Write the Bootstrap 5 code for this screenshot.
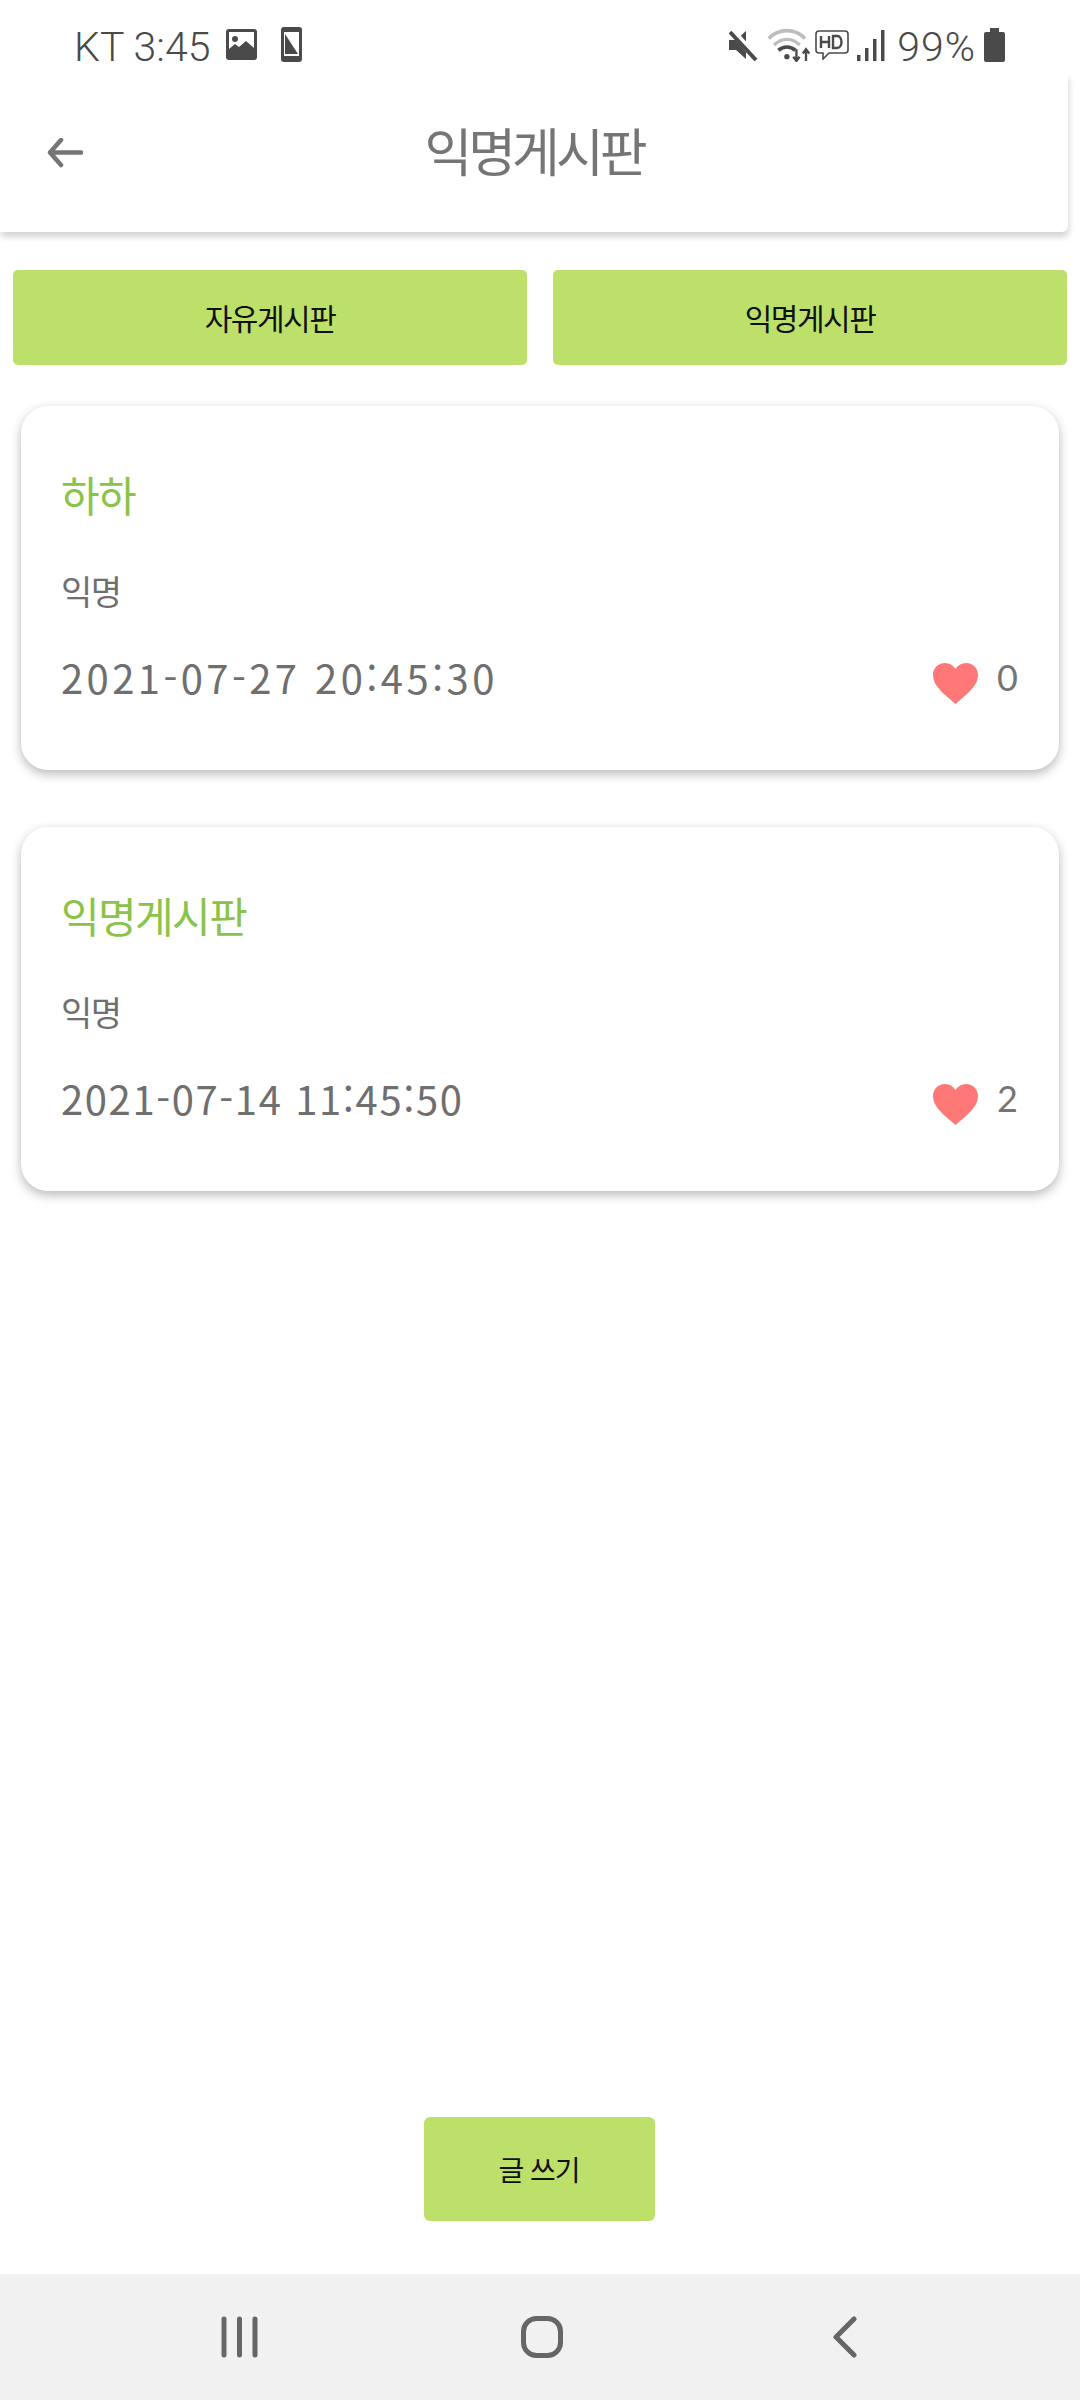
<!DOCTYPE html>
<html lang="ko">
<head>
<meta charset="utf-8">
<title>익명게시판</title>
<link rel="stylesheet" href="https://cdn.jsdelivr.net/npm/bootstrap@5.3.0/dist/css/bootstrap.min.css">
<style>
html,body{background:#fff;height:2400px;overflow:hidden}
body{font-family:"Noto Sans CJK KR","Noto Sans",sans-serif;color:#757575}
.screen{height:2400px}
.status-strip{height:73px;padding:16px 75px 0 74px;color:#4a4a4a;font-family:Roboto,"Liberation Sans",sans-serif;font-weight:300;font-size:41px;line-height:1}
.status-strip svg{display:block;flex:none}
.status-txt{margin-top:6px}
.pct-txt{letter-spacing:1px;margin-left:12px}
.app-head{height:159px;margin-right:12px;background:#fff;box-shadow:1px 5px 6px rgba(0,0,0,.17);border-radius:0 0 6px 0;position:relative}
.back-arrow{left:47px;top:65px}
.head-title{font-size:52px;letter-spacing:-4px;line-height:1;color:#757575;margin-top:-6px}
.tabs-wrap{padding:38px 13px 0;gap:26px}
.tab-btn{height:95px;font-size:30px;letter-spacing:-1.5px;color:#111;background:#bde06a;border:0;border-radius:5px;padding:0;flex:1 1 0}
.tab-btn:hover{background:#bde06a;color:#111}
.post-list{padding:41px 21px 0;gap:57px}
.post-box{height:364px;border:0;border-radius:27px;padding:52px 41px 0 40px;box-shadow:0 4px 11px rgba(0,0,0,.28)}
.post-title{font-size:42px;line-height:72px;color:#8bc34a;letter-spacing:-1.6px;margin:0}
.post-who{font-size:34px;line-height:60px;margin:31px 0 0;letter-spacing:-1.5px;color:#6f6f6f}
.post-line{margin-top:26px;height:60px}
.post-date{font-size:40px;color:#6f6f6f;line-height:60px}
.wide-date{letter-spacing:3.4px}
.tight-date{letter-spacing:1.6px}
.heart-ico{margin-top:12px}
.post-count{font-size:36px;line-height:60px;margin-left:19px;color:#757575;font-family:Lato,"Noto Sans",sans-serif}
.write-wrap{padding-right:2px}
.write-btn{width:231px;height:104px;font-size:28px;letter-spacing:-1px;color:#111;background:#bde06a;border:0;border-radius:6px;padding:0;margin-bottom:53px}
.write-btn:hover{background:#bde06a;color:#111}
.sys-nav{height:126px;background:#f1f1f1;position:relative}
.sys-nav svg{display:block}
.sys-bars{margin-left:221px}
.sys-home{margin-left:263px}
.sys-back{margin-left:270px}
</style>
</head>
<body>
<div class="screen d-flex flex-column">
  <div class="status-strip d-flex align-items-center justify-content-between">
    <div class="d-flex align-items-center">
      <span class="status-txt">KT 3:45</span>
      <svg class="ms-3" width="31" height="31" viewBox="0 0 31 31"><rect x="0" y="0" width="31" height="31" rx="3" fill="#4a4a4a"/><rect x="3" y="3" width="25" height="21" fill="#fff"/><circle cx="9" cy="10" r="3" fill="#4a4a4a"/><path d="M3 24V20l6-5 4 3 7-6 8 7v6z" fill="#4a4a4a"/></svg>
      <svg class="ms-4" width="21" height="35" viewBox="0 0 21 35"><rect width="21" height="35" rx="3" fill="#4a4a4a"/><rect x="3" y="5" width="15" height="24" fill="#fff"/><path d="M4 7l13 20v0H4z" fill="#4a4a4a"/></svg>
    </div>
    <div class="d-flex align-items-center">
      <svg width="30" height="32" viewBox="0 0 30 32"><path d="M0 11h7l10-9v28L7 21H0z" fill="#4a4a4a"/><path d="M2 1l27 30" stroke="#fff" stroke-width="7"/><path d="M1 3l26 28" stroke="#4a4a4a" stroke-width="4"/></svg>
      <svg class="ms-2" width="44" height="34" viewBox="0 0 40 32" fill="none"><path d="M1 10C10 0 26 0 35 10" stroke="#bdbdbd" stroke-width="3.5"/><path d="M6 16c7-7 17-7 24 0" stroke="#bdbdbd" stroke-width="3"/><path d="M10 21c5-4 11-4 16 0" stroke="#4a4a4a" stroke-width="3.5"/><circle cx="18" cy="27" r="2.5" fill="#4a4a4a"/><path d="M27 20v10M24 27l3 4 3-4M36 31V21M33 24l3-4 3 4" stroke="#4a4a4a" stroke-width="2.2"/></svg>
      <svg class="ms-1" width="34" height="30" viewBox="0 0 34 30" fill="none"><path d="M4 1h26a3 3 0 0 1 3 3v16a3 3 0 0 1-3 3H14l-6 6v-6H4a3 3 0 0 1-3-3V4a3 3 0 0 1 3-3z" stroke="#4a4a4a" stroke-width="1.6"/><path d="M6 6v12M14 6v12M6 12h8M18 6v12h4c6 0 6-12 0-12z" stroke="#4a4a4a" stroke-width="2.4"/></svg>
      <svg class="ms-2" width="28" height="32" viewBox="0 0 28 32"><rect x="0" y="26" width="3.5" height="6" fill="#4a4a4a"/><rect x="8" y="19" width="3.5" height="13" fill="#4a4a4a"/><rect x="16" y="10" width="3.5" height="22" fill="#4a4a4a"/><rect x="24" y="1" width="3.5" height="31" fill="#4a4a4a"/></svg>
      <span class="status-txt pct-txt">99%</span>
      <svg class="ms-2" width="21" height="34" viewBox="0 0 21 34"><path d="M6 0h9v4h4a2 2 0 0 1 2 2v26a2 2 0 0 1-2 2H2a2 2 0 0 1-2-2V6a2 2 0 0 1 2-2h4z" fill="#4a4a4a"/></svg>
    </div>
  </div>

  <header class="app-head d-flex align-items-center justify-content-center">
    <svg class="back-arrow position-absolute" width="36" height="30" viewBox="0 0 36 30" fill="none"><path d="M34 14.5H3M14 2L3 14.5 14 27" stroke="#757575" stroke-width="4.5" stroke-linecap="round" stroke-linejoin="round"/></svg>
    <span class="head-title">익명게시판</span>
  </header>

  <div class="tabs-wrap d-flex">
    <button type="button" class="btn tab-btn">자유게시판</button>
    <button type="button" class="btn tab-btn">익명게시판</button>
  </div>

  <div class="post-list d-flex flex-column">
    <article class="card post-box">
      <h2 class="post-title fw-normal">하하</h2>
      <p class="post-who">익명</p>
      <div class="post-line d-flex justify-content-between align-items-center">
        <span class="post-date wide-date">2021-07-27 20:45:30</span>
        <span class="d-flex align-items-center">
          <svg class="heart-ico" width="45" height="41" viewBox="0 0 45 41"><path d="M22.5 41C10 30 0 23 0 12 0 5 5 0 12 0c4.500 0 8 2 10.500 6C25 2 28.500 0 33 0c7 0 12 5 12 12 0 11-10 18-22.500 29z" fill="#ff7878"/></svg>
          <span class="post-count">0</span>
        </span>
      </div>
    </article>
    <article class="card post-box">
      <h2 class="post-title fw-normal">익명게시판</h2>
      <p class="post-who">익명</p>
      <div class="post-line d-flex justify-content-between align-items-center">
        <span class="post-date tight-date">2021-07-14 11:45:50</span>
        <span class="d-flex align-items-center">
          <svg class="heart-ico" width="45" height="41" viewBox="0 0 45 41"><path d="M22.5 41C10 30 0 23 0 12 0 5 5 0 12 0c4.500 0 8 2 10.500 6C25 2 28.500 0 33 0c7 0 12 5 12 12 0 11-10 18-22.500 29z" fill="#ff7878"/></svg>
          <span class="post-count">2</span>
        </span>
      </div>
    </article>
  </div>

  <div class="flex-grow-1"></div>
  <div class="write-wrap d-flex justify-content-center">
    <button type="button" class="btn write-btn">글 쓰기</button>
  </div>

  <nav class="sys-nav d-flex align-items-center">
    <svg class="sys-bars" width="37" height="42" viewBox="0 0 37 42" fill="none"><path d="M3 3v36M18.500 3v36M34 3v36" stroke="#666" stroke-width="5" stroke-linecap="round"/></svg>
    <svg class="sys-home" width="42" height="42" viewBox="0 0 42 42" fill="none"><rect x="2.500" y="2.500" width="37" height="37" rx="13" stroke="#666" stroke-width="5"/></svg>
    <svg class="sys-back" width="24" height="42" viewBox="0 0 24 42" fill="none"><path d="M21 3L3 21l18 18" stroke="#666" stroke-width="5" stroke-linecap="round" stroke-linejoin="round"/></svg>
  </nav>
</div>
<script src="https://cdn.jsdelivr.net/npm/bootstrap@5.3.0/dist/js/bootstrap.bundle.min.js"></script>
</body>
</html>
